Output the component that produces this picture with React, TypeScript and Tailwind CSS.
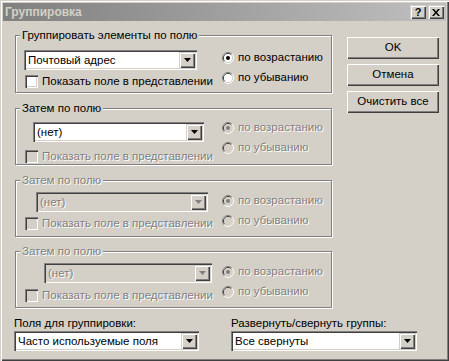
import React from "react";

const raised =
  "shadow-[inset_1px_1px_0_#d4d0c8,inset_2px_2px_0_#fff,inset_-1px_-1px_0_#404040,inset_-2px_-2px_0_#808080]";
const sunken =
  "shadow-[inset_1px_1px_0_#808080,inset_2px_2px_0_#404040,inset_-1px_-1px_0_#fff,inset_-2px_-2px_0_#d4d0c8]";
const dim = "text-[#808080] [text-shadow:1px_1px_0_#fff]";

const Radio = ({ checked, enabled }: { checked?: boolean; enabled: boolean }) => (
  <svg width="12" height="12" viewBox="0 0 12 12" className="shrink-0">
    <path d="M2.11 9.89 A5.5 5.5 0 0 1 9.89 2.11" fill="none" stroke="#808080" />
    <path d="M9.89 2.11 A5.5 5.5 0 0 1 2.11 9.89" fill="none" stroke="#fff" />
    <path d="M2.82 9.18 A4.5 4.5 0 0 1 9.18 2.82" fill="none" stroke="#404040" />
    <path d="M9.18 2.82 A4.5 4.5 0 0 1 2.82 9.18" fill="none" stroke="#d4d0c8" />
    <circle cx="6" cy="6" r="4" fill={enabled ? "#fff" : "#d4d0c8"} />
    {checked && <circle cx="6" cy="6" r="2" fill={enabled ? "#000" : "#808080"} />}
  </svg>
);

const Check = ({ enabled, label }: { enabled: boolean; label: string }) => (
  <div className="flex items-center h-[13px]">
    <div
      className={`w-[13px] h-[13px] shrink-0 ${sunken} ${enabled ? "bg-white" : "bg-[#d4d0c8]"}`}
    />
    <span className={`ml-[4px] ${enabled ? "text-black" : dim}`}>{label}</span>
  </div>
);

const Combo = ({
  value,
  enabled,
  className,
}: {
  value: string;
  enabled: boolean;
  className: string;
}) => (
  <div
    className={`h-[20px] flex items-center p-[2px] ${sunken} ${
      enabled ? "bg-white" : "bg-[#d4d0c8]"
    } ${className}`}
  >
    <span className={`flex-1 pl-[2px] leading-[16px] ${enabled ? "text-black" : dim}`}>
      {value}
    </span>
    <div className={`w-[16px] h-[16px] bg-[#d4d0c8] flex items-center justify-center ${raised}`}>
      <svg width="7" height="4" viewBox="0 0 7 4">
        <path d="M0 0h7L3.5 4z" fill={enabled ? "#000" : "#808080"} />
      </svg>
    </div>
  </div>
);

const Button = ({ children }: { children: React.ReactNode }) => (
  <div
    className={`w-[92px] h-[22px] flex items-center justify-center bg-[#d4d0c8] shadow-[inset_1px_1px_0_#fff,inset_-1px_-1px_0_#404040,inset_-2px_-2px_0_#808080]`}
  >
    {children}
  </div>
);

const groups = [
  {
    label: "Группировать элементы по полю",
    value: "Почтовый адрес",
    legendOn: true,
    comboOn: true,
    restOn: true,
    box: "mt-[14px] h-[58px]",
    left: "pt-[14px]",
    combo: "ml-[8px] w-[173px]",
    check: "mt-[5px]",
    radios: "pt-[12px]",
  },
  {
    label: "Затем по полю",
    value: "(нет)",
    legendOn: true,
    comboOn: true,
    restOn: false,
    box: "mt-[15px] h-[57px]",
    left: "pt-[13px]",
    combo: "ml-[17px] w-[171px]",
    check: "mt-[8px]",
    radios: "pt-[9px]",
  },
  {
    label: "Затем по полю",
    value: "(нет)",
    legendOn: false,
    comboOn: false,
    restOn: false,
    box: "mt-[15px] h-[57px]",
    left: "pt-[11px]",
    combo: "ml-[20px] w-[172px]",
    check: "mt-[5px]",
    radios: "pt-[10px]",
  },
  {
    label: "Затем по полю",
    value: "(нет)",
    legendOn: false,
    comboOn: false,
    restOn: false,
    box: "mt-[14px] h-[57px]",
    left: "pt-[11px]",
    combo: "ml-[28px] w-[168px]",
    check: "mt-[6px]",
    radios: "pt-[10px]",
  },
];

export default function App() {
  return (
    <div className="w-[449px] h-[361px] bg-[#d4d0c8] p-[3px] font-['Liberation_Sans',Arial,sans-serif] text-[11.5px] text-black shadow-[inset_1px_1px_0_#d4d0c8,inset_2px_2px_0_#fff,inset_-1px_-1px_0_#404040,inset_-2px_-2px_0_#808080] select-none">
      {/* title bar */}
      <div className="h-[18px] flex items-center pl-[2px] pr-[2px] bg-gradient-to-r from-[#808080] to-[#c0c0c0]">
        <span className="flex-1 font-bold text-[12px] text-[#d4d0c8] leading-[18px]">Группировка</span>
        <div className={`w-[16px] h-[14px] bg-[#d4d0c8] flex items-center justify-center font-bold text-[11px] leading-none ${raised}`}>
          ?
        </div>
        <div className={`ml-[2px] w-[16px] h-[14px] bg-[#d4d0c8] flex items-center justify-center ${raised}`}>
          <svg width="8" height="7" viewBox="0 0 8 7">
            <path d="M0 0h2l2 2.5L6 0h2L5 3.5 8 7H6L4 4.5 2 7H0l3-3.5z" fill="#000" />
          </svg>
        </div>
      </div>

      <div className="pl-[12px]">
        <div className="flex">
          <div className="w-[317px] shrink-0">
            {groups.map((g, i) => (
              <div
                key={i}
                className={`relative flex border border-[#808080] shadow-[inset_1px_1px_0_#fff,1px_1px_0_#fff] ${g.box}`}
              >
                <span
                  className={`absolute top-[-8px] left-[4px] px-[2px] bg-[#d4d0c8] leading-[14px] ${
                    g.legendOn ? "text-black" : dim
                  }`}
                >
                  {g.label}
                </span>
                <div className={`w-[206px] shrink-0 ${g.left}`}>
                  <Combo value={g.value} enabled={g.comboOn} className={g.combo} />
                  <div className={`ml-[9px] ${g.check}`}>
                    <Check enabled={g.restOn} label="Показать поле в представлении" />
                  </div>
                </div>
                <div className={g.radios}>
                  <div className="h-[20px] flex items-center gap-[4px]">
                    <Radio checked enabled={g.restOn} />
                    <span className={g.restOn ? "text-black" : dim}>по возрастанию</span>
                  </div>
                  <div className="h-[20px] flex items-center gap-[4px]">
                    <Radio enabled={g.restOn} />
                    <span className={g.restOn ? "text-black" : dim}>по убыванию</span>
                  </div>
                </div>
              </div>
            ))}
          </div>
          <div className="ml-[15px] mt-[16px] flex flex-col gap-[5px]">
            <Button>OK</Button>
            <Button>Отмена</Button>
            <Button>Очистить все</Button>
          </div>
        </div>

        <div className="flex -ml-[1px] mt-[8px]">
          <div className="w-[217px] shrink-0">
            <div className="h-[14px] leading-[14px]">Поля для группировки:</div>
            <Combo value="Часто используемые поля" enabled className="mt-[1px] w-[185px]" />
          </div>
          <div>
            <div className="h-[14px] leading-[14px]">Развернуть/свернуть группы:</div>
            <Combo value="Все свернуты" enabled className="mt-[1px] w-[186px]" />
          </div>
        </div>
      </div>
    </div>
  );
}
